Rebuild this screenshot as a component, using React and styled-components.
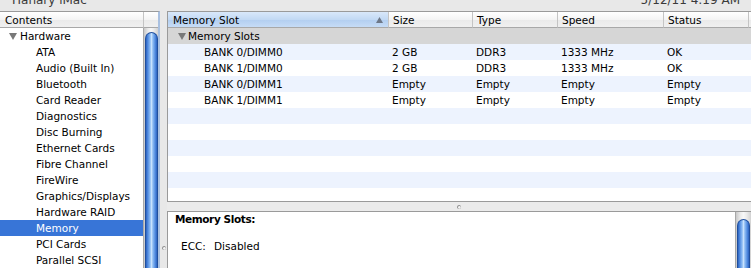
import React from 'react'
import styled, { createGlobalStyle } from 'styled-components'

const GlobalStyle = createGlobalStyle`
  html, body {
    margin: 0;
    padding: 0;
  }
  body {
    background: #e8e8e8;
    font-family: "DejaVu Sans", "Liberation Sans", sans-serif;
    font-size: 10.5px;
    color: #000;
    overflow: hidden;
  }
`

const COLS = '220px 84px 85px 106px 85px 1fr'

const Window = styled.div`
  width: 751px;
  height: 268px;
  display: flex;
  flex-direction: column;
  background: #e8e8e8;
  overflow: hidden;
`

const TitleStrip = styled.div`
  height: 11px;
  flex: none;
  display: flex;
  justify-content: space-between;
  padding: 0 11px 0 12px;
  overflow: hidden;
  font-size: 12px;
  line-height: 12px;
  color: #3a3a3a;
  span {
    display: block;
    margin-top: -6px;
  }
`

const Main = styled.div`
  flex: 1;
  min-height: 0;
  display: flex;
`

const Sidebar = styled.div`
  width: 160px;
  flex: none;
  box-sizing: border-box;
  display: grid;
  grid-template-columns: 143px 15px;
  grid-template-rows: 16px 1fr;
  border-top: 1px solid #9a9a9a;
  border-right: 2px solid #a9c0e0;
  background: #fff;
  overflow: hidden;
`

const HeaderCell = styled.div`
  box-sizing: border-box;
  height: 16px;
  display: flex;
  align-items: center;
  justify-content: space-between;
  padding: 0 5px 0 ${p => p.$pad || 4}px;
  border-bottom: 1px solid #a8a8a8;
  border-left: ${p => (p.$first ? 'none' : '1px solid #c4c4c4')};
  background: ${p =>
    p.$sorted
      ? 'linear-gradient(#d9e8fa, #c2d9f4 50%, #b2cef0 51%, #c6dcf6)'
      : 'linear-gradient(#ffffff, #f4f4f4 50%, #eaeaea 51%, #f0f0f0)'};
  white-space: nowrap;
  overflow: hidden;
`

const TreeList = styled.div`
  display: flex;
  flex-direction: column;
  overflow: hidden;
`

const TreeRow = styled.div`
  flex: none;
  height: 16px;
  display: flex;
  align-items: center;
  padding-left: ${p => p.$indent}px;
  background: ${p => (p.$selected ? '#3875d7' : 'transparent')};
  color: ${p => (p.$selected ? '#fff' : '#000')};
  white-space: nowrap;
`

const Disclosure = styled.svg`
  width: 8px;
  height: 7px;
  margin-right: ${p => p.$gap}px;
  flex: none;
`

const ScrollTrack = styled.div`
  display: flex;
  flex-direction: column;
  align-items: center;
  width: ${p => p.$w}px;
  flex: none;
  box-sizing: border-box;
  border-left: 1px solid #a8a8a8;
  background: linear-gradient(to right, #c9c9c9, #ececec 30%, #f8f8f8 50%, #ececec 70%, #d2d2d2);
`

const Thumb = styled.div`
  width: ${p => p.$w}px;
  flex: 1;
  margin-top: ${p => p.$top}px;
  box-sizing: border-box;
  border: 1px solid #1f4f9e;
  border-bottom: none;
  border-radius: 7px 7px 0 0;
  background: linear-gradient(
    to right,
    #2d62bd 0%,
    #4f8ae0 16%,
    #8fbdf3 38%,
    #c8e2fd 50%,
    #8fbdf3 62%,
    #4f8ae0 84%,
    #2d62bd 100%
  );
`

const VSplit = styled.div`
  width: 7px;
  flex: none;
  display: flex;
  flex-direction: column;
  justify-content: flex-end;
  align-items: center;
  padding-bottom: 18px;
  box-sizing: border-box;
`

const Grip = styled.span`
  display: block;
  width: 4px;
  height: 4px;
  border-radius: 50%;
  background: radial-gradient(circle at 60% 60%, #f4f4f4 0 25%, #8a8a8a 55%, #c8c8c8 100%);
`

const RightPane = styled.div`
  flex: 1;
  min-width: 0;
  display: flex;
  flex-direction: column;
`

const TablePanel = styled.div`
  height: 191px;
  flex: none;
  box-sizing: border-box;
  border-top: 1px solid #9a9a9a;
  border-left: 1px solid #9a9a9a;
  border-bottom: 1px solid #9a9a9a;
  background: #fff;
  overflow: hidden;
`

const GridRow = styled.div`
  display: grid;
  grid-template-columns: ${COLS};
  height: 16px;
  align-items: center;
  background: ${p => (p.$alt ? '#edf3fe' : '#fff')};
  white-space: nowrap;
`

const Cell = styled.div`
  padding-left: ${p => p.$pad || 4}px;
  overflow: hidden;
`

const GroupRow = styled.div`
  height: 16px;
  display: flex;
  align-items: center;
  padding-left: 10px;
  background: #d6d6d6;
`

const SortArrow = styled.svg`
  width: 7px;
  height: 6px;
  flex: none;
`

const HSplit = styled.div`
  height: 9px;
  flex: none;
  display: flex;
  align-items: center;
  justify-content: center;
  background: #ebebeb;
`

const DetailPanel = styled.div`
  flex: 1;
  min-height: 0;
  display: flex;
  box-sizing: border-box;
  border-top: 1px solid #9a9a9a;
  border-left: 1px solid #9a9a9a;
  background: #fff;
`

const DetailBody = styled.div`
  flex: 1;
  padding: 0 7px;
`

const DetailTitle = styled.div`
  font-weight: bold;
  letter-spacing: -0.4px;
  line-height: 14px;
`

const DetailLine = styled.div`
  margin-top: 13px;
  padding-left: 6px;
  line-height: 14px;
  display: flex;
`

const Label = styled.span`
  width: 33px;
  flex: none;
`

const sections = [
  'ATA', 'Audio (Built In)', 'Bluetooth', 'Card Reader', 'Diagnostics',
  'Disc Burning', 'Ethernet Cards', 'Fibre Channel', 'FireWire',
  'Graphics/Displays', 'Hardware RAID', 'Memory', 'PCI Cards', 'Parallel SCSI',
]

const slots = [
  ['BANK 0/DIMM0', '2 GB', 'DDR3', '1333 MHz', 'OK'],
  ['BANK 1/DIMM0', '2 GB', 'DDR3', '1333 MHz', 'OK'],
  ['BANK 0/DIMM1', 'Empty', 'Empty', 'Empty', 'Empty'],
  ['BANK 1/DIMM1', 'Empty', 'Empty', 'Empty', 'Empty'],
]

const columns = ['Memory Slot', 'Size', 'Type', 'Speed', 'Status']

function Triangle({ gap }) {
  return (
    <Disclosure $gap={gap} viewBox="0 0 8 7">
      <polygon points="0,0 8,0 4,7" fill="#787878" />
    </Disclosure>
  )
}

export default function App() {
  const blanks = Array.from({ length: 6 })
  return (
    <Window>
      <GlobalStyle />
      <TitleStrip>
        <span>Hanary iMac</span>
        <span>5/12/11 4:19 AM</span>
      </TitleStrip>
      <Main>
        <Sidebar>
          <HeaderCell $first $pad={5}>Contents</HeaderCell>
          <HeaderCell />
          <TreeList>
            <TreeRow $indent={9}>
              <Triangle gap={3} />
              Hardware
            </TreeRow>
            {sections.map(name => (
              <TreeRow key={name} $indent={36} $selected={name === 'Memory'}>
                {name}
              </TreeRow>
            ))}
          </TreeList>
          <ScrollTrack $w={15}>
            <Thumb $w={13} $top={4} />
          </ScrollTrack>
        </Sidebar>
        <VSplit>
          <Grip />
        </VSplit>
        <RightPane>
          <TablePanel>
            <GridRow>
              {columns.map((c, i) => (
                <HeaderCell key={c} $first={i === 0} $sorted={i === 0} $pad={i === 0 ? 5 : 4}>
                  {c}
                  {i === 0 && (
                    <SortArrow viewBox="0 0 7 6">
                      <polygon points="0,6 3.5,0 7,6" fill="#6e7888" />
                    </SortArrow>
                  )}
                </HeaderCell>
              ))}
              <HeaderCell />
            </GridRow>
            <GroupRow>
              <Triangle gap={2} />
              Memory Slots
            </GroupRow>
            {slots.map((row, r) => (
              <GridRow key={row[0]} $alt={r % 2 === 0}>
                {row.map((v, i) => (
                  <Cell key={i} $pad={i === 0 ? 36 : 4}>{v}</Cell>
                ))}
              </GridRow>
            ))}
            {blanks.map((_, r) => (
              <GridRow key={'b' + r} $alt={r % 2 === 0} />
            ))}
          </TablePanel>
          <HSplit>
            <Grip />
          </HSplit>
          <DetailPanel>
            <DetailBody>
              <DetailTitle>Memory Slots:</DetailTitle>
              <DetailLine>
                <Label>ECC:</Label>
                Disabled
              </DetailLine>
            </DetailBody>
            <ScrollTrack $w={16}>
              <Thumb $w={13} $top={7} />
            </ScrollTrack>
          </DetailPanel>
        </RightPane>
      </Main>
    </Window>
  )
}
